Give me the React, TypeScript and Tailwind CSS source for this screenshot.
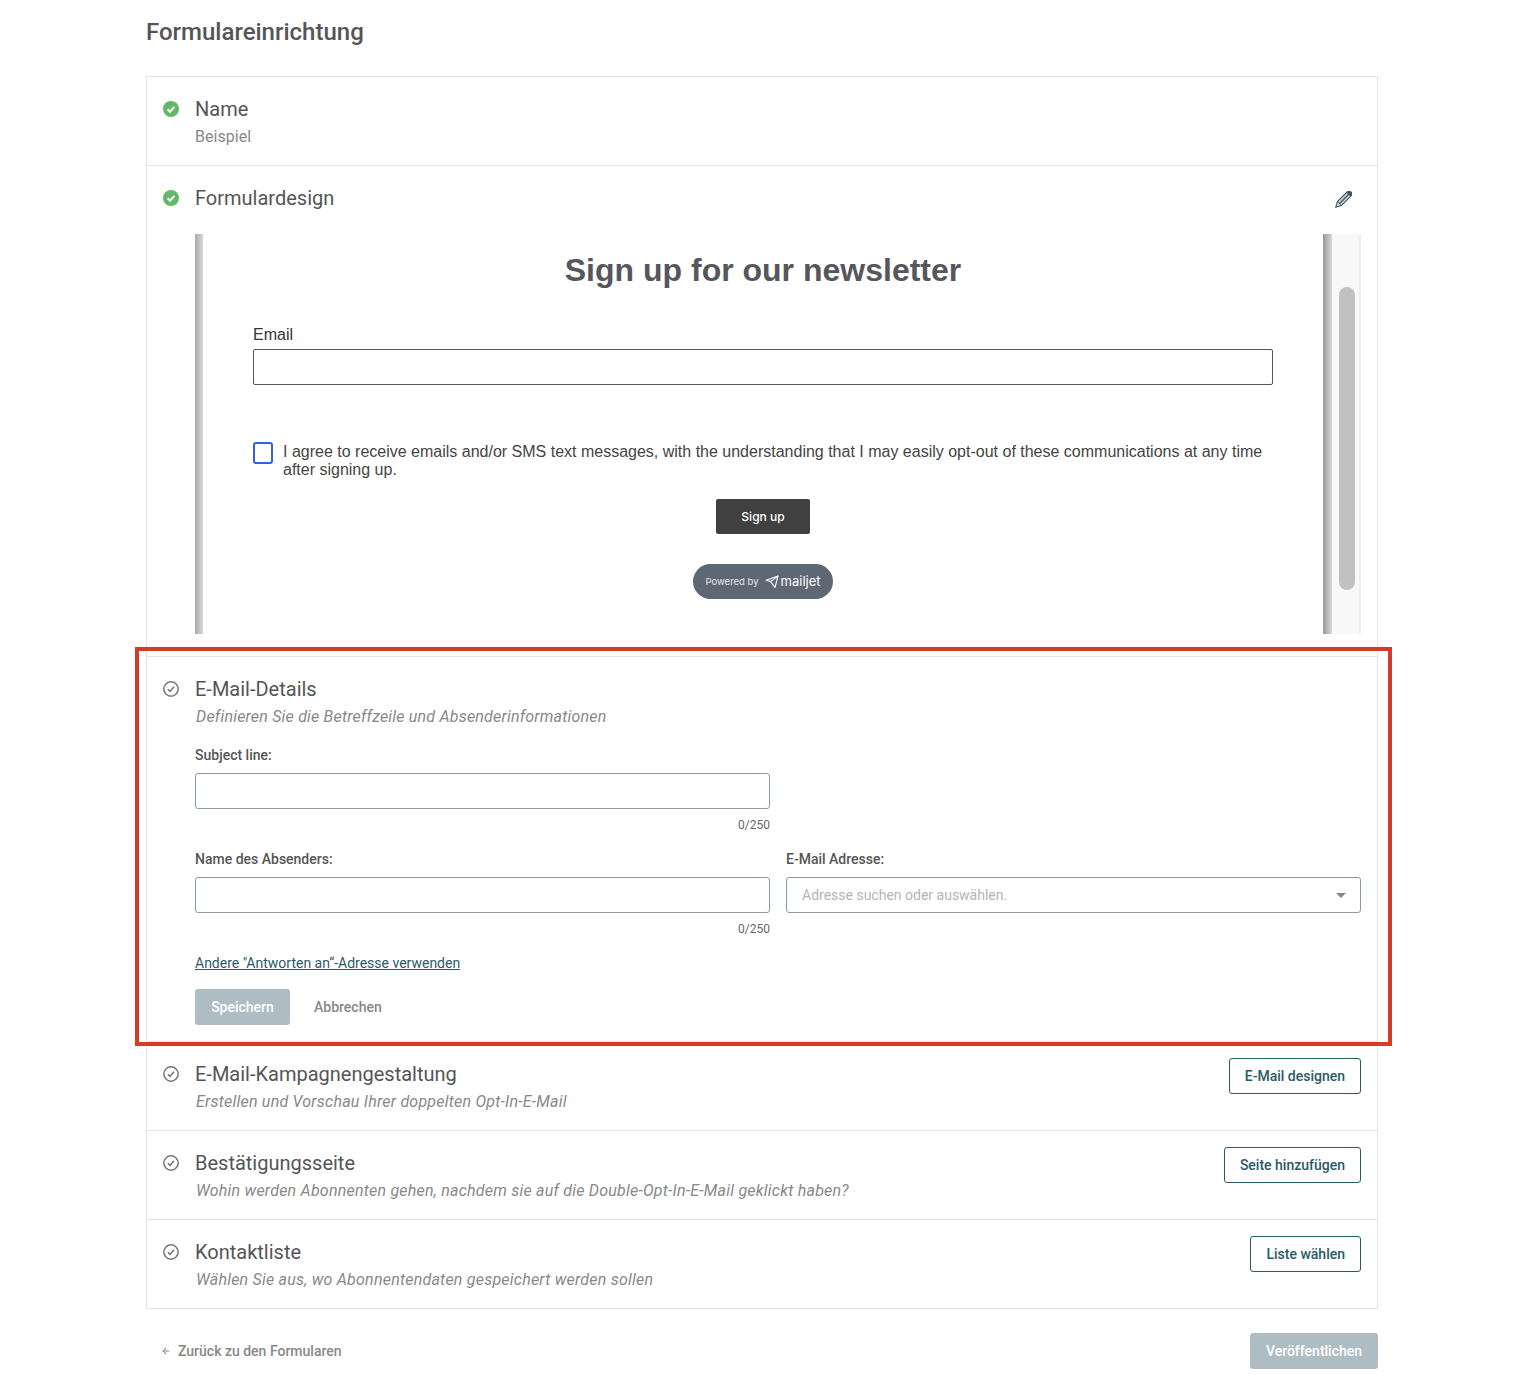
import { ArrowLeft } from 'lucide-react';

const CheckIcon = ({ done }: { done?: boolean }) => {
  if (done) {
    return (
      <svg width="16" height="16" viewBox="0 0 16 16" className="shrink-0">
        <circle cx="8" cy="8" r="8" fill="#62b866" />
        <path d="M4.6 8.3l2.4 2.4 4.4-4.9" fill="none" stroke="#fff" strokeWidth="2" />
      </svg>
    );
  }
  return (
    <svg width="16" height="16" viewBox="0 0 16 16" className="shrink-0">
      <circle cx="8" cy="8" r="7.2" fill="none" stroke="#777" strokeWidth="1.5" />
      <path d="M4.9 8.2l2.1 2.2 4-4.7" fill="none" stroke="#777" strokeWidth="1.6" />
    </svg>
  );
};

const PencilIcon = () => (
  <svg width="18" height="18" viewBox="0 0 18 18">
    <g transform="rotate(45 9 9)">
      <path d="M5.6 -1.2a1.6 1.6 0 0 1 1.6-1.6h3.6a1.6 1.6 0 0 1 1.6 1.6V14.2L9 20.4 5.6 14.2z" fill="#3f5560" />
      <rect x="6.8" y="1.2" width="1.5" height="12.6" fill="#d5dadd" />
      <rect x="9.7" y="1.2" width="1.5" height="12.6" fill="#d5dadd" />
      <path d="M7 14.6h4L9 18z" fill="#e8ebec" />
    </g>
  </svg>
);

const MailjetPlane = () => (
  <svg width="14" height="13" viewBox="0 0 14 13" fill="none" stroke="#fff" strokeWidth="1.1" strokeLinejoin="round">
    <path d="M13 1L1 5.2l4.6 1.4L10 12.4z" />
    <path d="M13 1L5.6 6.6" />
  </svg>
);

interface SectionProps {
  title: string;
  hint: string;
  action: string;
}

const sections: SectionProps[] = [
  { title: 'E-Mail-Kampagnengestaltung', hint: 'Erstellen und Vorschau Ihrer doppelten Opt-In-E-Mail', action: 'E-Mail designen' },
  { title: 'Bestätigungsseite', hint: 'Wohin werden Abonnenten gehen, nachdem sie auf die Double-Opt-In-E-Mail geklickt haben?', action: 'Seite hinzufügen' },
  { title: 'Kontaktliste', hint: 'Wählen Sie aus, wo Abonnentendaten gespeichert werden sollen', action: 'Liste wählen' },
];

const Section: React.FC<SectionProps> = ({ title, hint, action }) => (
  <div className="flex h-[89px] border-t border-[#e5e5e5] px-4">
    <div className="mt-[24px]">
      <CheckIcon />
    </div>
    <div className="ml-4 flex-1 pt-[20px]">
      <h3 className="text-[20px] leading-[24px] text-[#555]">{title}</h3>
      <p className="mt-[4px] pl-[1px] text-[16px] italic leading-[24px] tracking-[0.22px] text-[#888]">{hint}</p>
    </div>
    <button className="mt-[16px] h-[36px] rounded-[3px] border border-[#2a5a66] px-[15px] text-[14px] font-medium text-[#2a5a66]">
      {action}
    </button>
  </div>
);

const Counter = () => <p className="mt-[9px] text-right text-[12px] leading-[14px] text-[#666]">0/250</p>;

const App = () => {
  return (
    <div className="ml-[146px] h-[1390px] w-[1232px] bg-white font-['Roboto',sans-serif] text-[#555]">
      <h1 className="pt-[17px] text-[24px] font-medium leading-[30px] text-[#555]">Formulareinrichtung</h1>

      <div className="mt-[29px] border border-[#e5e5e5]">
        <div className="flex h-[88px] px-4">
          <div className="mt-[24px]">
            <CheckIcon done />
          </div>
          <div className="ml-4 pt-[20px]">
            <h3 className="text-[20px] leading-[24px]">Name</h3>
            <p className="mt-[4px] text-[16px] leading-[24px] tracking-[0.05px] text-[#888]">Beispiel</p>
          </div>
        </div>

        <div className="h-[491px] border-t border-[#e5e5e5] px-4">
          <div className="flex h-[68px]">
            <div className="mt-[24px]">
              <CheckIcon done />
            </div>
            <h3 className="ml-4 flex-1 pt-[20px] text-[20px] leading-[24px]">Formulardesign</h3>
            <div className="mr-[9px] mt-[25px]">
              <PencilIcon />
            </div>
          </div>

          <div className="ml-[32px] flex h-[400px]">
            <div className="w-[8px] bg-gradient-to-r from-[#aaa] to-[#d8d8d8]" />
            <div className="flex-1 px-[50px] font-['Liberation_Sans',sans-serif]">
              <h2 className="pt-[15px] text-center text-[32px] font-bold leading-[42px] text-[#55575d]">Sign up for our newsletter</h2>
              <label className="mt-[34px] block text-[16px] leading-[20px] text-[#333]">Email</label>
              <div className="mt-[4px] h-[36px] rounded-[2px] border border-[#555]" />
              <div className="mt-[58px] flex text-[16px] leading-[18px] text-[#444]">
                <span className="mt-[-1px] h-[22px] w-[20px] shrink-0 rounded-[3px] border-2 border-[#2f66e0]" />
                <p className="ml-[10px]">
                  I agree to receive emails and/or SMS text messages, with the understanding that I may easily opt-out of these communications at any time after signing up.
                </p>
              </div>
              <div className="mt-[20px] flex justify-center">
                <button className="h-[35px] w-[94px] rounded-[2px] bg-[#404040] font-['Inter',sans-serif] text-[12px] font-medium text-white">Sign up</button>
              </div>
              <div className="mt-[30px] flex justify-center">
                <div className="flex h-[35px] w-[140px] items-center justify-center rounded-full bg-[#5e6875] font-['Inter',sans-serif] text-white">
                  <span className="pt-[1px] text-[9.5px] text-[#e5e7ea]">Powered by</span>
                  <span className="ml-[6px]">
                    <MailjetPlane />
                  </span>
                  <span className="ml-[2px] text-[13px] font-normal leading-none">mailjet</span>
                </div>
              </div>
            </div>
            <div className="w-[9px] bg-gradient-to-r from-[#999] to-[#d8d8d8]" />
            <div className="flex w-[29px] justify-center border-r-2 border-[#eee] bg-[#f8f8f8] pl-[2px] pt-[53px]">
              <div className="h-[303px] w-[16px] rounded-full bg-[#c1c1c1]" />
            </div>
          </div>
        </div>

        <div className="relative h-[385px] border-t border-[#e5e5e5] px-4">
          <div className="pointer-events-none absolute top-[-10px] right-[-15px] bottom-[-5px] left-[-12px] border-[4px] border-[#d63b25]" />
          <div className="flex">
            <div className="mt-[24px]">
              <CheckIcon />
            </div>
            <div className="ml-4 flex-1 pt-[20px]">
              <h3 className="text-[20px] leading-[24px]">E-Mail-Details</h3>
              <p className="mt-[4px] pl-[1px] text-[16px] italic leading-[24px] tracking-[0.2px] text-[#888]">Definieren Sie die Betreffzeile und Absenderinformationen</p>

              <label className="mt-[16px] block text-[14px] font-medium leading-[20px] text-[#555]">Subject line:</label>
              <div className="mt-[8px] w-[575px]">
                <div className="h-[36px] rounded-[3px] border border-[#8c9aa2]" />
                <Counter />
              </div>

              <div className="mt-[17px] grid grid-cols-2 gap-x-4">
                <div>
                  <label className="block text-[14px] font-medium leading-[20px] text-[#555]">Name des Absenders:</label>
                  <div className="mt-[8px] h-[36px] rounded-[3px] border border-[#8c9aa2]" />
                  <Counter />
                </div>
                <div>
                  <label className="block text-[14px] font-medium leading-[20px] text-[#555]">E-Mail Adresse:</label>
                  <div className="mt-[8px] flex h-[36px] items-center justify-between rounded-[3px] border border-[#8c9aa2] pl-[15px] pr-[14px] text-[14px] text-[#b5b5b5]">
                    <span>Adresse suchen oder auswählen.</span>
                    <span className="h-0 w-0 border-x-[5px] border-t-[5px] border-x-transparent border-t-[#7c8b93]" />
                  </div>
                </div>
              </div>

              <a className="mt-[17px] block text-[14px] leading-[20px] text-[#2a5a66] underline">Andere "Antworten an“-Adresse verwenden</a>

              <div className="mt-[16px] flex items-center">
                <button className="h-[36px] w-[95px] rounded-[3px] bg-[#aebdc3] text-[14px] font-medium text-white">Speichern</button>
                <button className="ml-[24px] text-[14px] font-medium text-[#888]">Abbrechen</button>
              </div>
            </div>
          </div>
        </div>

        {sections.map((s) => (
          <Section key={s.title} {...s} />
        ))}
      </div>

      <div className="mt-[24px] flex items-center justify-between">
        <a className="ml-[15px] flex items-center text-[14px] font-medium text-[#888]">
          <ArrowLeft size={10} strokeWidth={2.5} />
          <span className="ml-[7px]">Zurück zu den Formularen</span>
        </a>
        <button className="h-[36px] w-[128px] rounded-[3px] bg-[#aebdc3] text-[14px] font-medium text-white">Veröffentlichen</button>
      </div>
    </div>
  );
};

export default App;
